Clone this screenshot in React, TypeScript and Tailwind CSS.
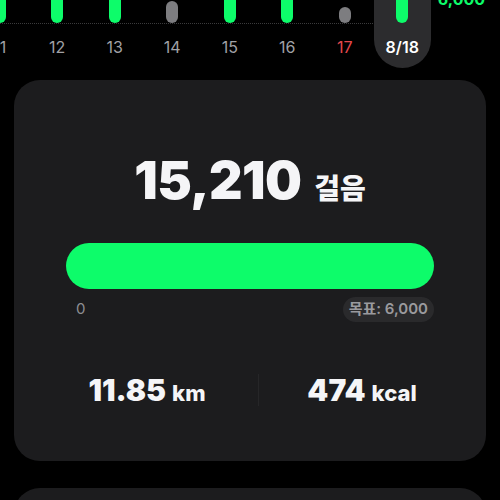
const days = [
  { label: "11", h: 40, on: true },
  { label: "12", h: 40, on: true },
  { label: "13", h: 40, on: true },
  { label: "14", h: 22, on: false },
  { label: "15", h: 40, on: true },
  { label: "16", h: 40, on: true },
  { label: "17", h: 16, on: false, red: true },
  { label: "8/18", h: 40, on: true, current: true },
  { label: "19", h: 0, on: false },
];

const font = { fontFamily: 'Inter, "Noto Sans CJK KR", sans-serif' };

function WeekStrip() {
  return (
    <div className="relative h-[68px]">
      {/* 점선 기준선 */}
      <div className="absolute left-0 top-[23px] w-[375px] border-t border-dotted border-[#3a3a3c]" />
      <div className="-ml-[29px] flex">
        {days.map((d) => (
          <div
            key={d.label}
            className={`relative flex h-[68px] w-[57.5px] shrink-0 flex-col items-center ${
              d.current ? "rounded-b-[29px] bg-[#2c2c2e]" : ""
            }`}
          >
            <div className="flex h-[23px] items-end">
              {d.h > 0 && (
                <div
                  className={`w-[12px] rounded-full ${d.on ? "bg-[#0dfc6a]" : "bg-[#7d7d80]"}`}
                  style={{ height: d.h }}
                />
              )}
            </div>
            <span
              className={`mt-[16px] text-[16px] leading-none ${
                d.current ? "font-semibold text-white" : d.red ? "text-[#e5484d]" : "text-[#a1a1a6]"
              }`}
            >
              {d.label === "19" ? "" : d.label}
            </span>
          </div>
        ))}
      </div>
      <span className="absolute right-[15px] top-[-13px] text-[16px] font-bold text-[#0dfc6a]">6,000</span>
    </div>
  );
}

function StepsCard() {
  return (
    <div className="mx-[14px] mt-[12px] h-[381px] rounded-[26px] bg-[#1c1c1e] pt-[75px]">
      <div className="flex items-baseline justify-center gap-[13px] text-[#f5f5f7]">
        <span className="text-[52px] font-black leading-none tracking-[-0.6px]">15,210</span>
        <span className="text-[28px] font-black leading-none">걸음</span>
      </div>
      <div className="mx-[52px] mt-[36px]">
        <div className="h-[46px] rounded-full bg-[#0dfc6a]" />
        <div className="mt-[8px] flex items-center justify-between">
          <span className="pl-[10px] text-[15px] text-[#8e8e93]">0</span>
          <span className="rounded-full bg-[#2a2a2c] px-[6px] py-[1px] text-[15px] font-semibold text-[#9a9a9e]">
            목표: 6,000
          </span>
        </div>
      </div>
      <div className="ml-[22px] mt-[52px] flex items-center">
        <div className="flex w-[222px] items-baseline justify-center gap-[6px] text-[#f5f5f7]">
          <span className="text-[30px] font-black leading-none">11.85</span>
          <span className="text-[22px] font-extrabold leading-none">km</span>
        </div>
        <div className="h-[32px] w-px bg-[#262628]" />
        <div className="flex w-[206px] items-baseline justify-center gap-[6px] text-[#f5f5f7]">
          <span className="text-[30px] font-black leading-none">474</span>
          <span className="text-[22px] font-extrabold leading-none">kcal</span>
        </div>
      </div>
    </div>
  );
}

export default function App() {
  return (
    <div className="h-[500px] w-[500px] overflow-hidden bg-black" style={font}>
      <WeekStrip />
      <StepsCard />
      <div className="mx-[14px] mt-[27px] h-[100px] rounded-[26px] bg-[#1c1c1e]" />
    </div>
  );
}
